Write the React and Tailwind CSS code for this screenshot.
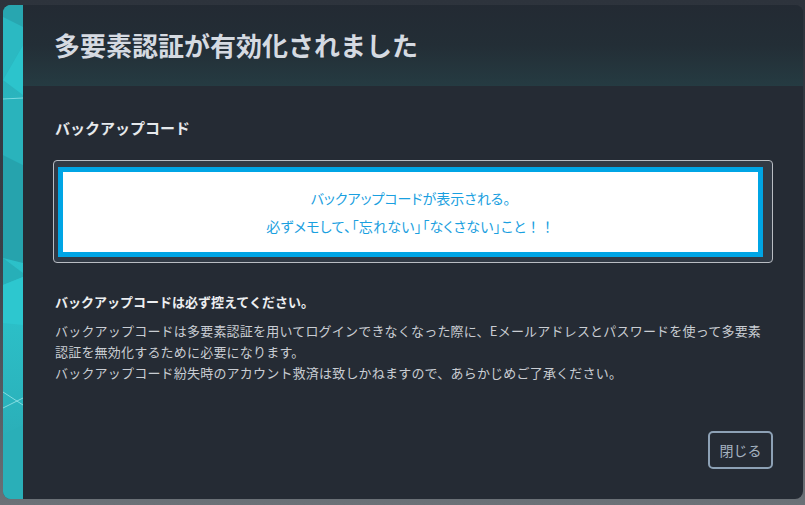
import React from 'react';

const Stripe = () => (
  <svg width="20" height="494" viewBox="0 0 20 494" className="block">
    <defs>
      <linearGradient id="stripeBase" x1="0" y1="0" x2="0" y2="1">
        <stop offset="0" stopColor="#29a8b2" />
        <stop offset="0.3" stopColor="#2bbcc5" />
        <stop offset="0.6" stopColor="#2cc2ca" />
        <stop offset="1" stopColor="#2aa6b0" />
      </linearGradient>
    </defs>
    <rect width="20" height="494" fill="url(#stripeBase)" />
    {/* faint geometric facets */}
    <polygon points="0,0 20,0 20,22 0,12" fill="#28a6b0" />
    <polygon points="0,12 20,22 20,40 0,75" fill="#2bb9c2" />
    <polygon points="0,75 20,40 20,90" fill="#2cc4cc" />
    <line x1="0" y1="94" x2="20" y2="93" stroke="#8fe3e8" strokeWidth="0.8" />
    <polygon points="0,95 20,94 20,160 0,150" fill="#2ab3bc" />
    <polygon points="0,150 20,160 20,258 0,253" fill="#26a3ad" />
    <polygon points="0,253 20,268 20,272 0,280" fill="#27afb8" />
    <polygon points="0,280 20,272 20,320 0,318" fill="#2dc7cf" />
    <line x1="0" y1="387" x2="20" y2="400" stroke="#9ae6ea" strokeWidth="0.8" />
    <line x1="0" y1="403" x2="20" y2="393" stroke="#9ae6ea" strokeWidth="0.8" />
    <polygon points="0,430 20,420 20,494 0,494" fill="#2aafb8" />
  </svg>
);

const App = () => {
  return (
    <div
      className="w-[805px] h-[505px] pt-[5px] pl-[3px] pr-[2px] pb-[6px] bg-gradient-to-b from-[#2d333c] via-[#3a4048] to-[#6b7177]"
      style={{ fontFamily: '"Noto Sans CJK JP", "Noto Sans", sans-serif' }}
    >
      <div className="flex h-full rounded-[8px] overflow-hidden bg-[#252b34]">
        <div className="w-[20px] shrink-0">
          <Stripe />
        </div>

        <div className="flex flex-col flex-1">
          <div className="h-[81px] flex items-center pl-[31px] pb-[2px] bg-gradient-to-b from-[#232a33] via-[#232e36] to-[#253b42]">
            <h1 className="text-[26px] font-bold text-[#d5dae1] leading-none">
              多要素認証が有効化されました
            </h1>
          </div>

          <div className="flex flex-col flex-1 px-[30px] pt-[32px] pb-[30px]">
            <h2 className="pl-[2px] text-[15px] font-bold leading-[20px] text-[#e6e9ec]">
              バックアップコード
            </h2>

            <div className="mt-[22px] h-[103px] border border-[#b9bdc3] rounded-[4px] bg-[#323a45] pt-[6px] pl-[4px] pr-[9px]">
              <div className="h-[90px] border-[5px] border-[#00a5e5] bg-white flex flex-col items-center justify-center text-[14px] leading-[28px] text-[#1aa0e0] [font-feature-settings:'palt']">
                <p>バックアップコードが表示される。</p>
                <p className="tracking-[0.3px]">
                  必ずメモして、「忘れない」「なくさない」こと
                  <span className="[font-feature-settings:normal]">！！</span>
                </p>
              </div>
            </div>

            <h3 className="mt-[29px] pl-[2px] text-[13px] font-bold leading-[20px] text-[#eceef0]">
              バックアップコードは必ず控えてください。
            </h3>
            <p className="mt-[8px] pl-[2px] text-[13px] leading-[21px] tracking-[0.2px] text-[#c9cdd3] whitespace-nowrap">
              バックアップコードは多要素認証を用いてログインできなくなった際に、Eメールアドレスとパスワードを使って多要素
              <br />
              認証を無効化するために必要になります。
              <br />
              バックアップコード紛失時のアカウント救済は致しかねますので、あらかじめご了承ください。
            </p>

            <div className="flex-1" />

            <div className="flex justify-end">
              <button className="w-[65px] h-[38px] border-2 border-[#8da1b5] rounded-[5px] text-[14px] text-[#a6b3c1]">
                閉じる
              </button>
            </div>
          </div>
        </div>
      </div>
    </div>
  );
};

export default App;
